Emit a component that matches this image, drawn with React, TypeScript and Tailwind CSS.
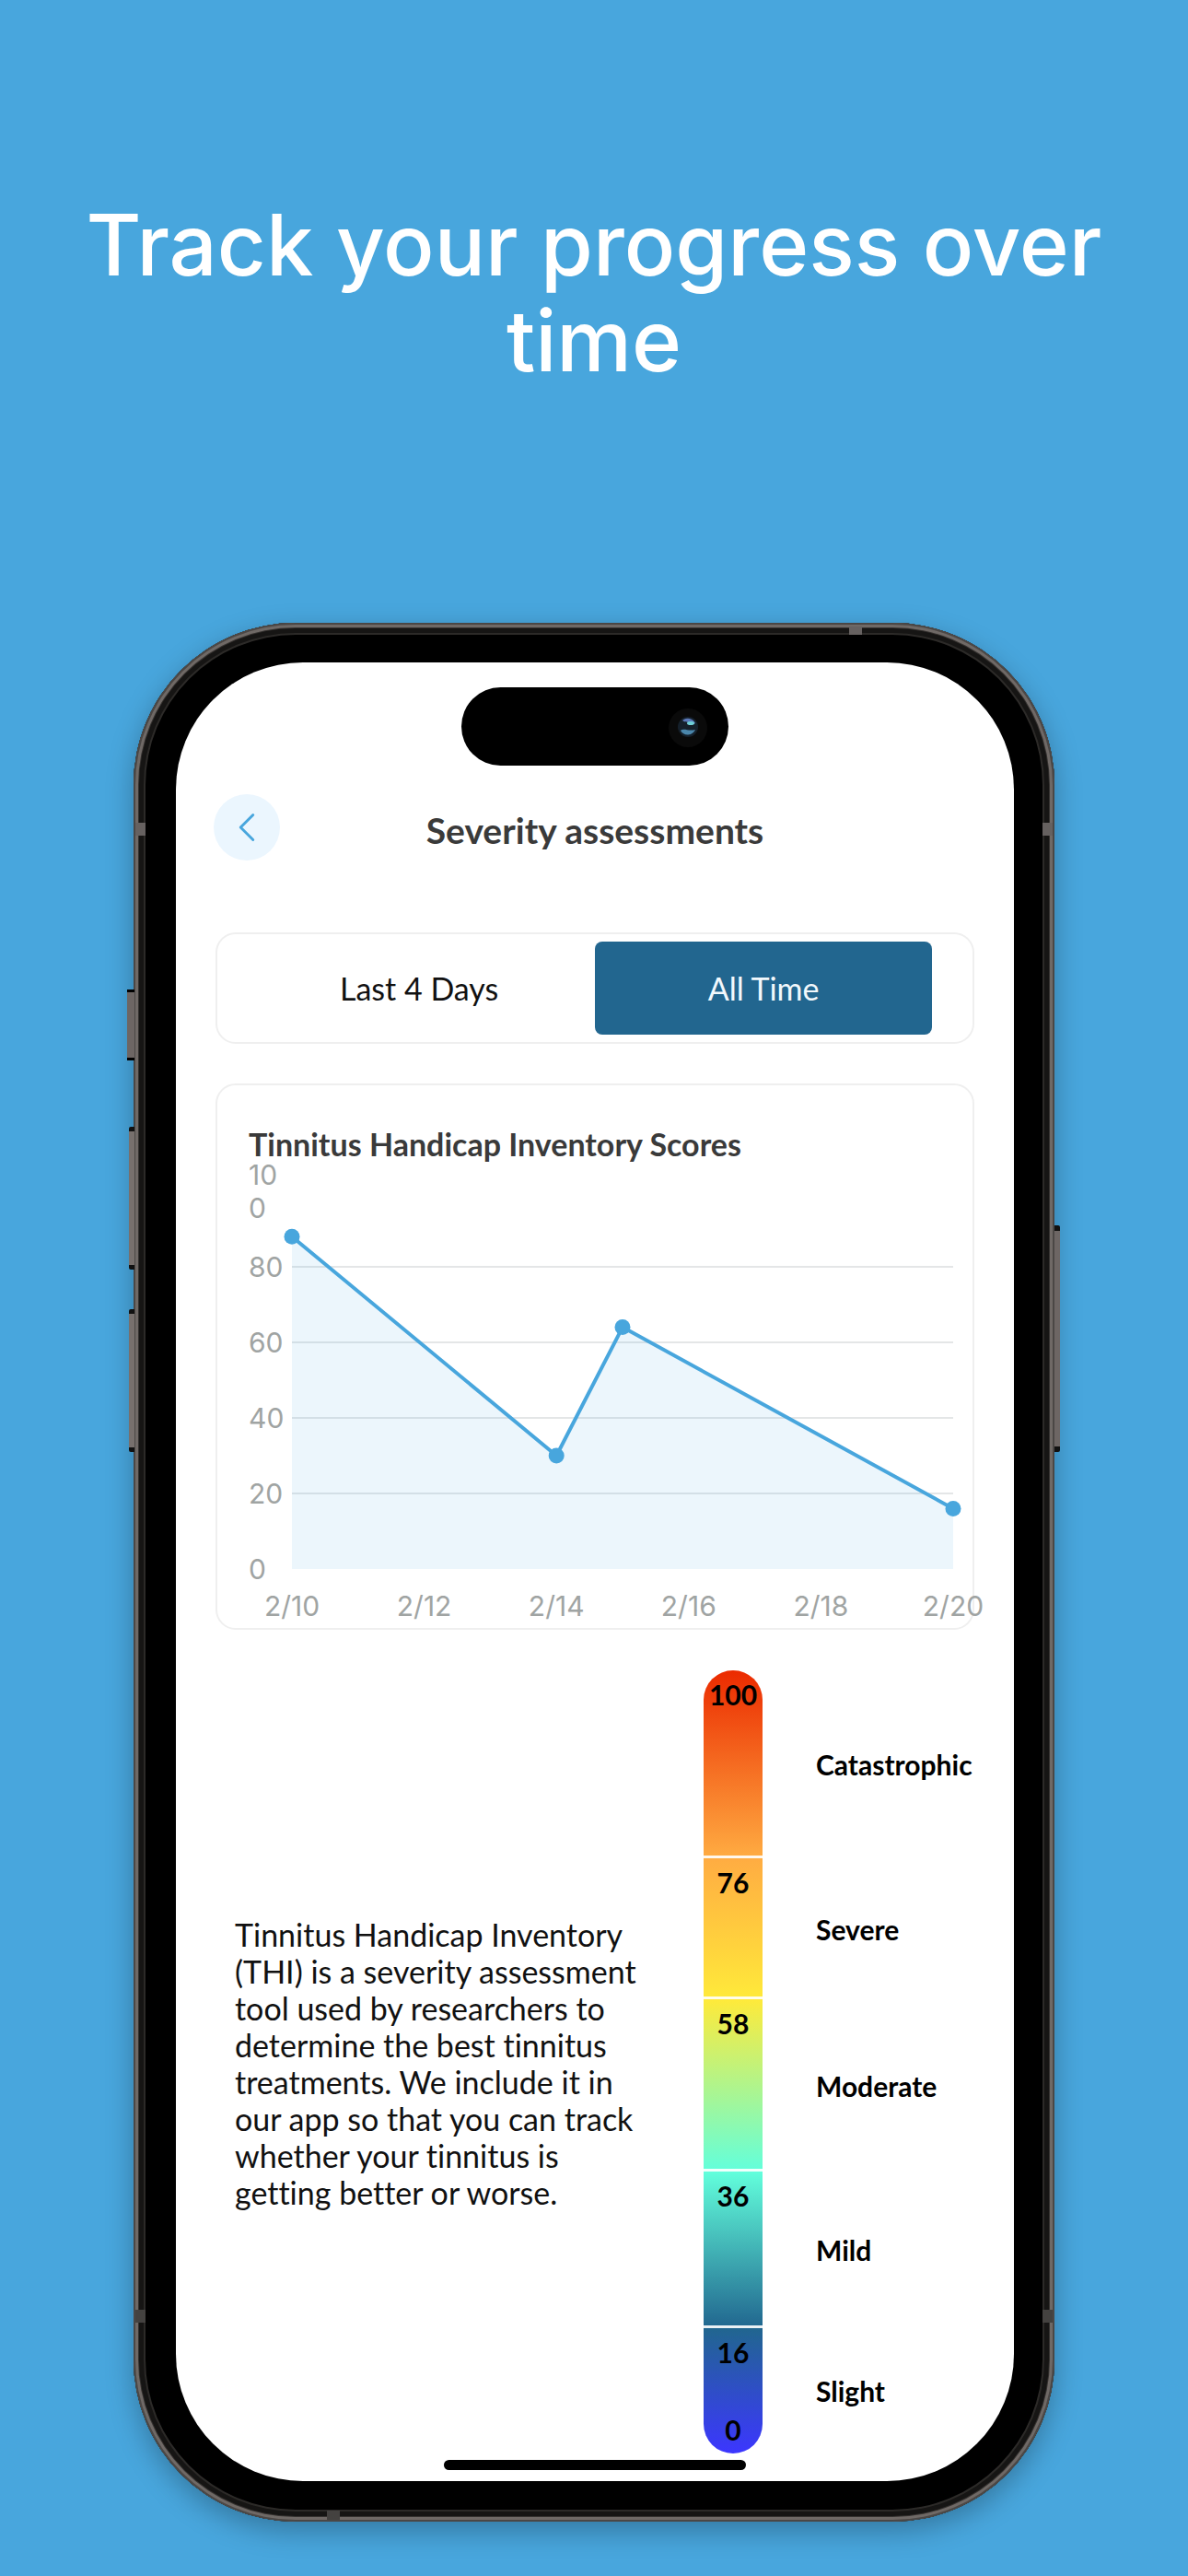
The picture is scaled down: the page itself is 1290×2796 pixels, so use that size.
import { ChevronLeft } from 'lucide-react';
import { useState } from 'react';

const scores = [
    { day: 0, score: 88 },
    { day: 4, score: 30 },
    { day: 5, score: 64 },
    { day: 10, score: 16 },
];

const yTicks = [100, 80, 60, 40, 20, 0];
const xTicks = ['2/10', '2/12', '2/14', '2/16', '2/18', '2/20'];
const ranges = ['Last 4 Days', 'All Time'];

const levels = [
    { label: 'Catastrophic', top: 100, bottom: 76 },
    { label: 'Severe', top: 76, bottom: 58 },
    { label: 'Moderate', top: 58, bottom: 36 },
    { label: 'Mild', top: 36, bottom: 16 },
    { label: 'Slight', top: 16, bottom: 0 },
];

function Header() {
    return (
        <header className="relative flex h-[72px] items-center justify-center">
            <button
                aria-label="Back"
                className="absolute top-0 -left-0.5 flex size-[72px] items-center justify-center rounded-full bg-[#ebf6fe] text-[#48a6dd]"
            >
                <ChevronLeft className="size-[54px]" strokeWidth={1.3} />
            </button>
            <h2 className="pt-1.5 text-[39px] leading-[46px] font-bold text-[#3a3a3a]">Severity assessments</h2>
        </header>
    );
}

function RangeToggle() {
    const [active, setActive] = useState(1);

    return (
        <div className="mt-[78px] grid grid-cols-[23fr_22fr] rounded-[22px] border-2 border-[#efefef] py-2 pr-11 pl-7">
            {ranges.map((range, i) => (
                <button
                    key={range}
                    onClick={() => setActive(i)}
                    className={`h-[101px] rounded-lg text-[34px] ${
                        i === active ? 'bg-[#22668f] text-[#f2f8fc]' : 'text-[#111]'
                    }`}
                >
                    {range}
                </button>
            ))}
        </div>
    );
}

function ScoreChart() {
    const line = scores.map((p) => `${p.day},${100 - p.score}`).join(' ');

    return (
        <section className="mt-[43px] rounded-[22px] border-2 border-[#efefef] pt-11 pr-[21px] pb-1.5 pl-[34px]">
            <h3 className="text-[34px] leading-10 font-bold text-[#3a3a3a]">Tinnitus Handicap Inventory Scores</h3>
            <div className="-mt-2.5 flex font-[Inter,sans-serif] text-[30px] leading-9 text-[#a0a4a3]">
                <div className="w-[47px] shrink-0">
                    {yTicks.map((tick) => (
                        <div key={tick} className="flex h-[82px] w-[44px] items-center">
                            <span className="break-all">{tick}</span>
                        </div>
                    ))}
                </div>
                <div className="min-w-0 flex-1 pt-[41px]">
                    <svg className="block h-[410px] w-full overflow-visible" role="img" aria-label="Scores from 2/10 to 2/20">
                        {yTicks.slice(1, -1).map((tick) => (
                            <line
                                key={tick}
                                x1="0"
                                x2="100%"
                                y1={`${100 - tick}%`}
                                y2={`${100 - tick}%`}
                                stroke="#e4e6e7"
                                strokeWidth="2"
                            />
                        ))}
                        <svg viewBox="0 0 10 100" preserveAspectRatio="none" width="100%" height="100%" overflow="visible">
                            <polygon points={`0,100 ${line} 10,100`} fill="#48a6dd" fillOpacity="0.1" />
                            <polyline
                                points={line}
                                fill="none"
                                stroke="#48a6dd"
                                strokeWidth="4"
                                strokeLinejoin="round"
                                vectorEffect="non-scaling-stroke"
                            />
                        </svg>
                        {scores.map((p) => (
                            <circle key={p.day} cx={`${p.day * 10}%`} cy={`${100 - p.score}%`} r="8.5" fill="#48a6dd" />
                        ))}
                    </svg>
                    <div className="mt-[22px] flex justify-between">
                        {xTicks.map((tick) => (
                            <div key={tick} className="flex w-0 justify-center">
                                <span>{tick}</span>
                            </div>
                        ))}
                    </div>
                </div>
            </div>
        </section>
    );
}

function SeverityScale() {
    return (
        <section className="mt-11 flex h-[850px]">
            <div className="flex flex-1 items-center pt-1 pr-[62px] pl-[21px]">
                <p className="text-[34px] leading-10 text-[#111] [font-variant-ligatures:none]">
                    Tinnitus Handicap Inventory (THI) is a severity assessment tool used by researchers to determine the
                    best tinnitus treatments. We include it in our app so that you can track whether your tinnitus is
                    getting better or worse.
                </p>
            </div>
            <div className="flex w-16 shrink-0 flex-col overflow-hidden rounded-full bg-[linear-gradient(to_bottom,#eb2a00_0%,#ffac42_24%,#ffea3a_42%,#62ffdc_64%,#21668f_84%,#3c36ff_100%)] text-center text-[30px] leading-9 font-bold text-black">
                {levels.map((level) => (
                    <div
                        key={level.label}
                        className="flex flex-col justify-between border-b-3 border-white/90 pt-2 pb-2 last:border-b-0"
                        style={{ height: `${level.top - level.bottom}%` }}
                    >
                        <span>{level.top}</span>
                        {level.bottom === 0 && <span>0</span>}
                    </div>
                ))}
            </div>
            <div className="ml-[58px] w-[172px] shrink-0 text-[30px] leading-9 font-bold text-black">
                {levels.map((level) => (
                    <div
                        key={level.label}
                        className="flex items-center"
                        style={{ height: `${level.top - level.bottom}%` }}
                    >
                        {level.label}
                    </div>
                ))}
            </div>
        </section>
    );
}

// Side buttons and antenna bands of the handset
function Hardware() {
    return (
        <>
            <div className="absolute top-[398px] -left-[7px] h-[77px] w-2 border-y-3 border-black bg-[#6d6664]" />
            <div className="absolute top-[547px] -left-[5px] h-[155px] w-1.5 rounded-l-xs border-y-5 border-[#111] bg-[#77706d]" />
            <div className="absolute top-[745px] -left-[5px] h-[155px] w-1.5 rounded-l-xs border-y-5 border-[#111] bg-[#77706d]" />
            <div className="absolute top-[654px] -right-[6px] h-[246px] w-1.5 rounded-r-xs border-y-6 border-[#111] bg-[#6d6664]" />
            <div className="absolute top-[217px] left-0.5 h-3.5 w-[11px] bg-[#666160]" />
            <div className="absolute top-[217px] right-0.5 h-3.5 w-[11px] bg-[#666160]" />
            <div className="absolute bottom-[216px] left-0.5 h-3.5 w-[11px] bg-[#444240]" />
            <div className="absolute right-0.5 bottom-[216px] h-3.5 w-[11px] bg-[#444240]" />
            <div className="absolute top-1 right-[209px] h-[9px] w-3.5 bg-[#666160]" />
            <div className="absolute bottom-0.5 left-[210px] h-[10px] w-3.5 bg-[#444240]" />
        </>
    );
}

function DynamicIsland() {
    return (
        <div className="absolute top-[27px] left-1/2 flex h-[85px] w-[290px] -translate-x-1/2 items-center justify-end rounded-full bg-black pr-[22px]">
            <svg viewBox="0 0 44 44" className="size-11">
                <circle cx="22" cy="23" r="21" fill="#0a0a0a" />
                <circle cx="22" cy="22" r="11" fill="#15202b" />
                <path d="M16 15a9 9 0 0 1 14 3c-3 2-6 0-8-1s-4 0-6-2z" fill="#5a78b8" />
                <ellipse cx="25" cy="18" rx="4" ry="2" fill="#6fd0d8" />
                <path d="M14 26c4-3 8 1 16-1a9 9 0 0 1-16 1z" fill="#4a86ab" />
            </svg>
        </div>
    );
}

export default function App() {
    return (
        <main className="flex min-h-screen flex-col items-center bg-[#48a6dd] px-16 pb-[59px] font-[Lato,sans-serif]">
            <h1 className="pt-[214px] text-center font-[Inter,sans-serif] text-[92px] leading-[104px] font-medium text-white">
                Track your progress over time
            </h1>

            <div className="relative mt-[254px] w-full max-w-[1000px] rounded-[176px] bg-black pt-[43px] pr-11 pb-11 pl-[46px] shadow-[0_10px_30px_rgba(0,0,0,0.28),inset_0_0_0_2px_#4b4745,inset_0_0_0_5px_#6f6966,inset_0_0_0_6px_#34312f,inset_0_0_0_11px_#161514,inset_0_0_0_13px_#2c2a28]">
                <Hardware />
                <div className="relative rounded-[138px] bg-white px-[43px] pt-[143px] pb-[30px]">
                    <DynamicIsland />
                    <Header />
                    <RangeToggle />
                    <ScoreChart />
                    <SeverityScale />
                    <div className="absolute bottom-3 left-1/2 h-[11px] w-[328px] -translate-x-1/2 rounded-full bg-black" />
                </div>
            </div>
        </main>
    );
}
